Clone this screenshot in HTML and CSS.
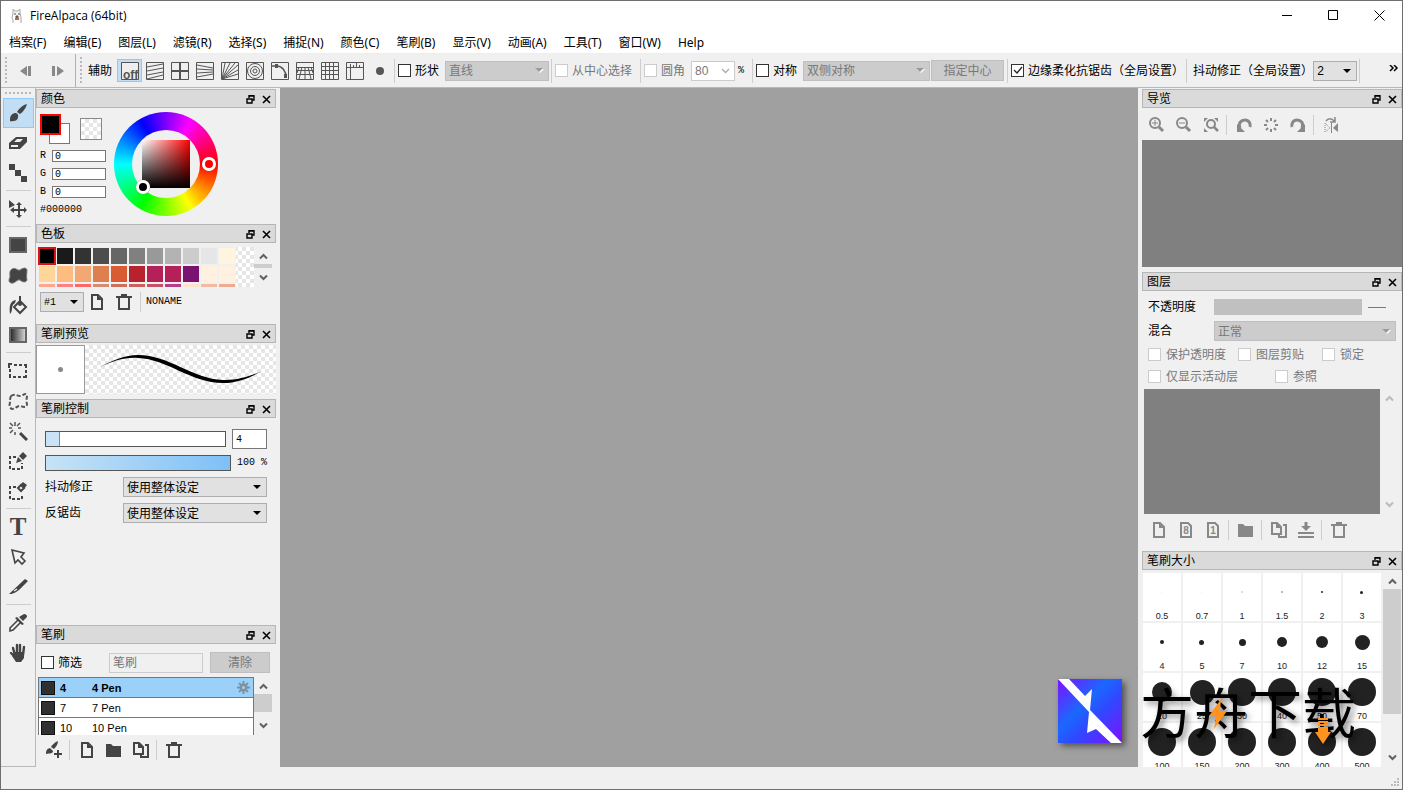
FILE: index.html
```
<!DOCTYPE html>
<html lang="zh-CN">
<head>
    <meta charset="UTF-8">
    <meta name="viewport" content="width=device-width, initial-scale=1.0">
    <title>FireAlpaca (64bit)</title>
    <link rel="stylesheet" href="styles.css">
</head>
<body>
    <!-- shared icons -->
    <svg class="defs" width="0" height="0" aria-hidden="true">
        <symbol id="float" viewBox="0 0 9 9"><path d="M3 1h5v4h-2M3 .5h5.5M1 4h5v4h-5zM.5 4h6M3 0v3" fill="none" stroke="currentColor" stroke-width="1.4"/></symbol>
        <symbol id="close" viewBox="0 0 9 9"><path d="M1 1l7 7M8 1l-7 7" stroke="currentColor" stroke-width="1.6"/></symbol>
        <symbol id="up" viewBox="0 0 9 7"><path d="M1 5.5l3.5-3.5l3.5 3.5" fill="none" stroke="currentColor" stroke-width="2"/></symbol>
        <symbol id="down" viewBox="0 0 9 7"><path d="M1 1.5l3.5 3.5l3.5-3.5" fill="none" stroke="currentColor" stroke-width="2"/></symbol>
        <symbol id="page" viewBox="0 0 18 18"><path d="M4 2h6l4 4v10h-10z" fill="none" stroke="currentColor" stroke-width="2"/><path d="M9 2l5 5h-5z" fill="currentColor"/></symbol>
        <symbol id="pages" viewBox="0 0 18 18"><path d="M2 2h5l4 4v7h-9z" fill="none" stroke="currentColor" stroke-width="2"/><path d="M6 1l5 6h-5z" fill="currentColor"/><path d="M13 4h3v12h-7v-2" fill="none" stroke="currentColor" stroke-width="2"/></symbol>
        <symbol id="folder" viewBox="0 0 18 18"><path d="M1 3h5l2 2h8v11h-15z" fill="currentColor"/></symbol>
        <symbol id="trash" viewBox="0 0 18 18"><path d="M1 4h16M6 2h6M4 4v12h10v-12" fill="none" stroke="currentColor" stroke-width="2"/></symbol>
        <symbol id="loupe" viewBox="0 0 18 18"><circle cx="7" cy="7" r="5" fill="none" stroke="currentColor" stroke-width="2"/><path d="M11 11l4 4" stroke="currentColor" stroke-width="3"/></symbol>
        <symbol id="rotate" viewBox="0 0 18 18"><path d="M5 12c-2-5 1-8 5-8c4 0 6 4 5 7" fill="none" stroke="currentColor" stroke-width="3"/><path d="M2 16v-8l8 8z" fill="currentColor"/></symbol>
    </svg>

    <div class="window">
        <header class="titlebar">
            <svg class="logo" width="14" height="16" viewBox="0 0 14 16"><path d="M3 5v-4l2 2h3l2-2v4l1 4v6M3 5l-1 5l1 2v3" fill="#f4f4f4" stroke="#aaa"/><path d="M4 6h2M8 6h2M6 8h2v2h-2z" stroke="#555" fill="#777"/><path d="M5 10h4v2h-4z" fill="#b66a50"/></svg>
            <h1>FireAlpaca (64bit)</h1>
            <div class="window-buttons">
                <button aria-label="Minimize"><svg width="11" height="11" viewBox="0 0 11 11"><path d="M0 5.500h10" stroke="#000"/></svg></button>
                <button aria-label="Maximize"><svg width="11" height="11" viewBox="0 0 11 11"><path d="M.5.5h9v9h-9z" fill="none" stroke="#000"/></svg></button>
                <button aria-label="Close"><svg width="11" height="11" viewBox="0 0 11 11"><path d="M.5.5l10 10M10.500.5l-10 10" stroke="#000"/></svg></button>
            </div>
        </header>

        <nav class="menubar">
            <a href="#">档案(F)</a>
            <a href="#">编辑(E)</a>
            <a href="#">图层(L)</a>
            <a href="#">滤镜(R)</a>
            <a href="#">选择(S)</a>
            <a href="#">捕捉(N)</a>
            <a href="#">颜色(C)</a>
            <a href="#">笔刷(B)</a>
            <a href="#">显示(V)</a>
            <a href="#">动画(A)</a>
            <a href="#">工具(T)</a>
            <a href="#">窗口(W)</a>
            <a href="#">Help</a>
        </nav>

        <div class="toolbar">
            <div class="history">
                <span class="grip"></span>
                <button aria-label="Undo" disabled><svg width="14" height="12" viewBox="0 0 14 12"><path d="M8 1v10l-7-5z" fill="#888"/><path d="M10.500 1v10" stroke="#888" stroke-width="3"/></svg></button>
                <button aria-label="Redo" disabled><svg width="14" height="12" viewBox="0 0 14 12"><path d="M6 1v10l7-5z" fill="#888"/><path d="M2.500 1v10" stroke="#888" stroke-width="3"/></svg></button>
            </div>
            <span class="grip"></span>
            <span class="assist-label">辅助</span>
            <div class="assist">
                <button class="active" aria-label="off"><svg width="18" height="18" viewBox="0 0 18 18"><path d="M.5.5h17v17h-17z" fill="#eee" stroke="#555"/><text x="2" y="17" class="off-text">off</text></svg></button>
                <button aria-label="Parallel"><svg width="18" height="18" viewBox="0 0 18 18"><path d="M.5.5h17v17h-17zM1 5l16-3M1 9l16-3M1 13l16-3M1 17l16-4" fill="none" stroke="#555"/></svg></button>
                <button aria-label="Cross"><svg width="18" height="18" viewBox="0 0 18 18"><path d="M.5.5h17v17h-17z" fill="none" stroke="#555"/><path d="M1 9h16M9 1v16" stroke="#555" stroke-width="2"/></svg></button>
                <button aria-label="Vanishing point"><svg width="18" height="18" viewBox="0 0 18 18"><path d="M.5.5h17v17h-17zM1 3l16 3M1 7l16 1M1 11l16-1M1 15l16-3" fill="none" stroke="#555"/></svg></button>
                <button aria-label="Radial"><svg width="18" height="18" viewBox="0 0 18 18"><path d="M.5.5h17v17h-17zM1 17l3-16M1 17l8-16M1 17l13-16M1 17l16-14M1 17l16-9M1 17l16-5" fill="none" stroke="#555"/></svg></button>
                <button aria-label="Concentric"><svg width="18" height="18" viewBox="0 0 18 18"><g fill="none" stroke="#555"><path d="M.5.5h17v17h-17z"/><circle cx="9" cy="9" r="7.500"/><circle cx="9" cy="9" r="4.500"/><circle cx="9" cy="9" r="2"/></g></svg></button>
                <button aria-label="Curve"><svg width="18" height="18" viewBox="0 0 18 18"><path d="M.5.5h17v17h-17z" fill="none" stroke="#555"/><path d="M1 4h5c5 0 9 5 9 11" fill="none" stroke="#555" stroke-width="1.500"/><path d="M4 2h3v4h-3zM13 12h3v4h-3z" fill="#555"/></svg></button>
                <button aria-label="Perspective"><svg width="18" height="18" viewBox="0 0 18 18"><path d="M.5.5h17v17h-17zM0 5.500h17M0 8.500h17M0 12.500h17M6 5l-3 12M9 5v12M12 5l3 12M3 5l-2 6M15 5l2 6" fill="none" stroke="#555"/></svg></button>
                <button aria-label="Grid"><svg width="18" height="18" viewBox="0 0 18 18"><path d="M.5.5h17v17h-17zM0 4.500h18M0 8.500h18M0 12.500h18M4.500 0v18M8.500 0v18M12.500 0v18" fill="none" stroke="#555"/></svg></button>
                <button aria-label="Ruler"><svg width="18" height="18" viewBox="0 0 18 18"><path d="M.5.5h17v17h-17zM0 5.500h18M4.500 2v16M7.500 3v2M10.500 1v4M13.500 3v2" fill="none" stroke="#555"/></svg></button>
                <button aria-label="Dot"><svg width="18" height="18" viewBox="0 0 18 18"><circle cx="9" cy="9" r="4" fill="#555"/></svg></button>
            </div>
            <div class="group">
                <label><input type="checkbox">形状</label>
                <select class="shape-kind" aria-label="形状" disabled><option>直线</option></select>
            </div>
            <div class="group wide">
                <label><input type="checkbox" disabled>从中心选择</label>
            </div>
            <div class="group">
                <label><input type="checkbox" disabled>圆角</label>
                <select class="round" aria-label="圆角" disabled><option>80</option></select>
                <span class="mono">%</span>
            </div>
            <div class="group">
                <label><input type="checkbox">对称</label>
                <select class="symmetry" aria-label="对称" disabled><option>双侧对称</option></select>
                <button class="push" disabled>指定中心</button>
            </div>
            <div class="group">
                <label><input type="checkbox" checked>边缘柔化抗锯齿（全局设置）</label>
            </div>
            <div class="group stabilizer">
                <label for="stab">抖动修正（全局设置）</label>
                <select id="stab"><option>2</option></select>
            </div>
            <button class="more" aria-label="More"><svg width="10" height="7" viewBox="0 0 10 7"><path d="M1 0l3 3l-3 3M5 0l3 3l-3 3" fill="none" stroke="#000" stroke-width="1.500"/></svg></button>
        </div>

        <main class="workspace">
            <aside class="tools">
                <span class="grip-h"></span>
                <button class="active" aria-label="Brush"><svg width="20" height="20" viewBox="0 0 20 20"><path d="M19 1c-4 1-8 4-10 8l3 2c3-2 6-6 7-10z"/><path d="M7 10c2 0 4 2 3 4c0 3-3 4-4 4c-2 0-3 1-4 0c0-3 0-7 5-8"/></svg></button>
                <button aria-label="Eraser"><svg width="20" height="20" viewBox="0 0 20 20"><path d="M1 10l7-6h11v5l-7 7h-11z"/><path d="M3 12h7v2h-7zM6 9l3-3h6l-3 3z" fill="#f0f0f0"/></svg></button>
                <button aria-label="Dot tool"><svg width="20" height="20" viewBox="0 0 20 20"><path d="M1 1h6v6h-6zM7 7h6v6h-6zM13 13h6v6h-6z"/></svg></button>
                <hr>
                <button aria-label="Move"><svg width="20" height="20" viewBox="0 0 20 20"><path d="M1 1l6 5l-6 3zM11 3l-3 3h2v4h-4v-2l-4 3l4 3v-2h4v4h-2l3 3l3-3h-2v-4h4v2l3-3l-3-3v2h-4v-4h2z"/></svg></button>
                <hr>
                <button aria-label="Fill shape"><svg width="20" height="20" viewBox="0 0 20 20"><path d="M2 3h16v14h-16z" stroke="#666" stroke-width="2"/></svg></button>
                <button aria-label="Fill polygon"><svg width="20" height="20" viewBox="0 0 20 20"><path d="M4 4c4-2 5 2 8 1c3-2 6-3 7 0c0 4-1 6 0 10c-1 3-5 2-7 0c-3-1-5 4-9 3c-3-1-2-4-1-6c0-3-1-6 2-8z" stroke="#777"/></svg></button>
                <button aria-label="Bucket"><svg width="20" height="20" viewBox="0 0 20 20"><path d="M12 6l6 6l-6 6l-6-6zM12 1v8" fill="none" stroke="#444" stroke-width="2"/><path d="M8 5c-6 1-7 6-6 14c4-4 0-8 5-11z"/><circle cx="12" cy="9" r="2"/></svg></button>
                <button aria-label="Gradient"><svg width="20" height="20" viewBox="0 0 20 20"><defs><linearGradient id="grey"><stop offset="0" stop-color="#222"/><stop offset="1" stop-color="#ddd"/></linearGradient></defs><path d="M2 3h16v14h-16z" fill="url(#grey)" stroke="#666" stroke-width="2"/></svg></button>
                <hr>
                <button aria-label="Select"><svg width="20" height="20" viewBox="0 0 20 20"><path d="M1 7v-4h3M6 4h3M11 4h3M16 4h2v3M18 9v3M18 14v2h-3M13 16h-3M8 16h-3M3 16h-1v-3M2 11v-3" fill="none" stroke="#444" stroke-width="2"/></svg></button>
                <button aria-label="Lasso"><svg width="20" height="20" viewBox="0 0 20 20"><path d="M3 5c4-3 6 0 9 0s5-4 7-1c0 3-1 6 0 9c0 4-4 3-6 2c-4-1-5 3-9 3c-4-2-2-5-2-7c0-2 0-4 1-6" fill="none" stroke="#555" stroke-width="2" stroke-dasharray="4 2"/></svg></button>
                <button aria-label="Magic wand"><svg width="20" height="20" viewBox="0 0 20 20"><path d="M12 12l7 7" fill="none" stroke="#444" stroke-width="3"/><path d="M7 1v4M7 11v3M1 7h3M10 7h3M2 2l3 3M12 2l-3 3M2 12l3-3" stroke="#555" stroke-width="1.500"/></svg></button>
                <button aria-label="Select pen"><svg width="20" height="20" viewBox="0 0 20 20"><path d="M8 6h-6v12h12v-6" fill="none" stroke="#444" stroke-width="2" stroke-dasharray="3 2"/><path d="M15 1l4 4l-4 4l-4-4zM10 6l4 4l-6 2z"/></svg></button>
                <button aria-label="Select eraser"><svg width="20" height="20" viewBox="0 0 20 20"><path d="M8 6h-6v12h12v-5" fill="none" stroke="#444" stroke-width="2" stroke-dasharray="3 2"/><path d="M15 1l4 3l-3 4l-4-4z"/><path d="M13 4l3 3l-3 3l-3-3z" fill="none" stroke="#444" stroke-width="2"/></svg></button>
                <hr>
                <button aria-label="Text"><svg width="20" height="20" viewBox="0 0 20 20"><text x="10" y="18" class="tool-t">T</text></svg></button>
                <button aria-label="Operation"><svg width="20" height="20" viewBox="0 0 20 20"><path d="M4 3l12 3l-3 4l4 4l-3 3l-4-4l-3 3z" fill="none" stroke="#444" stroke-width="1.600"/></svg></button>
                <button aria-label="Divide"><svg width="20" height="20" viewBox="0 0 20 20"><path d="M17 2l3 2l-9 9c-3 2-5 4-10 4z"/><path d="M6 14l3-2" stroke="#eee" stroke-width="1.500"/></svg></button>
                <hr>
                <button aria-label="Eyedropper"><svg width="20" height="20" viewBox="0 0 20 20"><path d="M16 1c3 0 4 3 2 4l-3 3l-4-4zM9 4l7 7l-2 1l-7-7z"/><path d="M10 7l-8 8v3l3-1l8-8" fill="none" stroke="#444" stroke-width="1.600"/></svg></button>
                <button aria-label="Hand"><svg width="20" height="20" viewBox="0 0 20 20"><path d="M5 5l2 7M9 2v9M12 2v9M16 4l-1 8M3 10l5 5" fill="none" stroke="#444" stroke-width="2.400" stroke-linecap="round"/><path d="M6 9h10v6l-3 4h-5l-4-6z"/></svg></button>
            </aside>

            <aside class="dock dock-left">
                <section class="panel">
                    <h2>颜色 <span class="panel-buttons"><button aria-label="Float"><svg width="9" height="9"><use href="#float"/></svg></button><button aria-label="Close"><svg width="9" height="9"><use href="#close"/></svg></button></span></h2>
                    <div class="color-body">
                        <div class="color-fields">
                            <div class="swatches">
                                <span class="pair"><i class="back"></i><i class="front"></i></span>
                                <i class="none checker"></i>
                            </div>
                            <label>R <input type="text" value="0"></label>
                            <label>G <input type="text" value="0"></label>
                            <label>B <input type="text" value="0"></label>
                            <span>#000000</span>
                        </div>
                        <div class="wheel">
                            <div class="wheel-hole"><div class="shade"></div></div>
                            <i class="knob hue-knob"></i>
                            <i class="knob shade-knob"></i>
                        </div>
                    </div>
                </section>

                <section class="panel">
                    <h2>色板 <span class="panel-buttons"><button aria-label="Float"><svg width="9" height="9"><use href="#float"/></svg></button><button aria-label="Close"><svg width="9" height="9"><use href="#close"/></svg></button></span></h2>
                    <div class="palette">
                        <div class="palette-grid checker">
                            <i class="picked" style="background:#000"></i><i style="background:#1a1a1a"></i><i style="background:#333"></i><i style="background:#4d4d4d"></i><i style="background:#666"></i><i style="background:#808080"></i><i style="background:#999"></i><i style="background:#b3b3b3"></i><i style="background:#ccc"></i><i style="background:#e6e6e6"></i><i style="background:#fff4de"></i>
                            <i style="background:#ffd699"></i><i style="background:#ffbc80"></i><i style="background:#f2a873"></i><i style="background:#df7f50"></i><i style="background:#d95b34"></i><i style="background:#b8222c"></i><i style="background:#b62059"></i><i style="background:#b62059"></i><i style="background:#7a126f"></i><i style="background:#fff0e0"></i><i style="background:#fff0e0"></i>
                            <i style="background:#ffa68c"></i><i style="background:#ff8080"></i><i style="background:#ff6666"></i><i style="background:#d68c73"></i><i style="background:#cc7059"></i><i style="background:#cc6060"></i><i style="background:#c75068"></i><i style="background:#b53d8b"></i><i style="background:#ffe3cf"></i><i style="background:#f4b99e"></i><i style="background:#f0aa8c"></i>
                        </div>
                        <div class="scroll"><svg width="9" height="7"><use href="#up"/></svg><b class="thumb-6"></b><svg width="9" height="7"><use href="#down"/></svg></div>
                    </div>
                    <div class="palette-bar">
                        <select class="mono" aria-label="色板"><option>#1</option></select>
                        <button aria-label="New"><svg width="18" height="18"><use href="#page"/></svg></button>
                        <button aria-label="Delete"><svg width="18" height="18"><use href="#trash"/></svg></button>
                        <span class="mono palette-name">NONAME</span>
                    </div>
                </section>

                <section class="panel">
                    <h2>笔刷预览 <span class="panel-buttons"><button aria-label="Float"><svg width="9" height="9"><use href="#float"/></svg></button><button aria-label="Close"><svg width="9" height="9"><use href="#close"/></svg></button></span></h2>
                    <div class="preview">
                        <div class="tip"><i></i></div>
                        <svg class="checker" width="191" height="49" viewBox="0 0 191 49"><path d="M15 22C28 15 40 10 53 10C84 10 108 34 138 35C152 35.500 166 31 177 26C166 32 153 38 138 38C106 38 82 14 53 13C40 12 28 16 15 22z" fill="#000"/></svg>
                    </div>
                </section>

                <section class="panel grow">
                    <h2>笔刷控制 <span class="panel-buttons"><button aria-label="Float"><svg width="9" height="9"><use href="#float"/></svg></button><button aria-label="Close"><svg width="9" height="9"><use href="#close"/></svg></button></span></h2>
                    <div class="control">
                        <div class="control-row"><input class="size-range" type="range" min="0" max="50" value="4" aria-label="笔刷大小"><input class="size-value" type="text" value="4" aria-label="笔刷大小"></div>
                        <div class="control-row"><input class="alpha-range" type="range" value="100" aria-label="不透明度"><span class="mono">100 %</span></div>
                        <div class="control-row pick"><label for="fix">抖动修正</label><select id="fix"><option>使用整体设定</option></select></div>
                        <div class="control-row pick"><label for="aa">反锯齿</label><select id="aa"><option>使用整体设定</option></select></div>
                    </div>
                </section>

                <section class="panel">
                    <h2>笔刷 <span class="panel-buttons"><button aria-label="Float"><svg width="9" height="9"><use href="#float"/></svg></button><button aria-label="Close"><svg width="9" height="9"><use href="#close"/></svg></button></span></h2>
                    <div class="filter">
                        <label><input type="checkbox">筛选</label>
                        <input type="text" placeholder="笔刷" aria-label="笔刷" disabled>
                        <button class="push" disabled>清除</button>
                    </div>
                    <div class="brushes">
                        <ul>
                            <li class="selected"><i></i><span>4</span><span>4 Pen</span><svg width="13" height="13" viewBox="0 0 13 13"><g stroke="#8092a0" stroke-width="2"><path d="M6.500 0v13M0 6.500h13M2 2l9 9M11 2l-9 9"/></g><circle cx="6.500" cy="6.500" r="4" fill="#8092a0"/><circle cx="6.500" cy="6.500" r="1.500" fill="#9bd0f8"/></svg></li>
                            <li><i></i><span>7</span><span>7 Pen</span></li>
                            <li><i></i><span>10</span><span>10 Pen</span></li>
                        </ul>
                        <div class="scroll"><svg width="9" height="7"><use href="#up"/></svg><b class="thumb-18"></b><svg class="last" width="9" height="7"><use href="#down"/></svg></div>
                    </div>
                    <div class="icon-bar brush-bar">
                        <button aria-label="Add brush"><svg width="18" height="18" viewBox="0 0 18 18"><path d="M13 0c-3 1-6 4-7 6l3 2c2-2 4-5 4-8zM5 7l3 3c0 3-3 2-7 3c0-2 0-5 4-6" fill="currentColor"/><path d="M13 9v8M9 13h8" stroke="currentColor" stroke-width="2"/></svg></button>
                        <hr>
                        <button aria-label="New"><svg width="18" height="18"><use href="#page"/></svg></button>
                        <button aria-label="Folder"><svg width="18" height="18"><use href="#folder"/></svg></button>
                        <button aria-label="Duplicate"><svg width="18" height="18"><use href="#pages"/></svg></button>
                        <hr>
                        <button aria-label="Delete"><svg width="18" height="18"><use href="#trash"/></svg></button>
                    </div>
                </section>
            </aside>

            <div class="canvas"></div>

            <aside class="dock dock-right">
                <section class="panel">
                    <h2>导览 <span class="panel-buttons"><button aria-label="Float"><svg width="9" height="9"><use href="#float"/></svg></button><button aria-label="Close"><svg width="9" height="9"><use href="#close"/></svg></button></span></h2>
                    <div class="icon-bar muted nav-bar">
                        <button aria-label="Zoom in"><svg width="18" height="18" viewBox="0 0 18 18"><use href="#loupe"/><path d="M4 7h6M7 4v6" stroke="currentColor"/></svg></button>
                        <button aria-label="Zoom out"><svg width="18" height="18" viewBox="0 0 18 18"><use href="#loupe"/><path d="M4 7h6" stroke="currentColor"/></svg></button>
                        <button aria-label="Fit"><svg width="18" height="18" viewBox="0 0 18 18"><circle cx="9" cy="8" r="4" fill="none" stroke="currentColor" stroke-width="2"/><path d="M12 11l4 4" stroke="currentColor" stroke-width="2.500"/><path d="M2 6v-4h4zM16 6v-4h-4zM2 12v4h4z" fill="currentColor"/></svg></button>
                        <hr>
                        <button aria-label="Rotate left"><svg width="18" height="18"><use href="#rotate"/></svg></button>
                        <button aria-label="Reset"><svg width="18" height="18" viewBox="0 0 18 18"><path d="M9 2v3M9 13v3M2 9h3M13 9h3M4 4l2 2M12 12l2 2M14 4l-2 2M6 12l-2 2" stroke="currentColor" stroke-width="2"/></svg></button>
                        <button aria-label="Rotate right"><svg width="18" height="18" viewBox="0 0 18 18"><g transform="matrix(-1 0 0 1 18 0)"><use href="#rotate"/></g></svg></button>
                        <hr>
                        <button aria-label="Flip"><svg width="18" height="18" viewBox="0 0 18 18"><path d="M16 7v9l-5-4z" fill="currentColor"/><path d="M9.500 7v10" stroke="currentColor"/><path d="M3 7v9l5-4z" fill="none" stroke="currentColor" stroke-dasharray="1 1"/><path d="M4 5c2-3 6-3 8 0M13 1v5h-5" fill="none" stroke="currentColor" stroke-width="1.500"/></svg></button>
                    </div>
                    <div class="navigator"></div>
                </section>

                <section class="panel">
                    <h2>图层 <span class="panel-buttons"><button aria-label="Float"><svg width="9" height="9"><use href="#float"/></svg></button><button aria-label="Close"><svg width="9" height="9"><use href="#close"/></svg></button></span></h2>
                    <div class="layer-form">
                        <div class="layer-row"><label for="opacity">不透明度</label><input id="opacity" type="range" disabled><span class="dash"></span></div>
                        <div class="layer-row"><label for="blend">混合</label><select id="blend" disabled><option>正常</option></select></div>
                        <div class="layer-checks">
                            <label><input type="checkbox" disabled>保护透明度</label>
                            <label><input type="checkbox" disabled>图层剪贴</label>
                            <label><input type="checkbox" disabled>锁定</label>
                        </div>
                        <div class="layer-checks second">
                            <label><input type="checkbox" disabled>仅显示活动层</label>
                            <label><input type="checkbox" disabled>参照</label>
                        </div>
                    </div>
                    <div class="layer-list">
                        <div class="layer-area"></div>
                        <div class="scroll faded"><svg width="9" height="7"><use href="#up"/></svg><svg class="last" width="9" height="7"><use href="#down"/></svg></div>
                    </div>
                    <div class="icon-bar muted layer-bar">
                        <button aria-label="New layer"><svg width="18" height="18"><use href="#page"/></svg></button>
                        <button aria-label="New 8bit layer"><svg width="18" height="18" viewBox="0 0 18 18"><path d="M4 2h7l3 3v11h-10z" fill="none" stroke="currentColor" stroke-width="2"/><text x="9" y="13" class="bit">8</text></svg></button>
                        <button aria-label="New 1bit layer"><svg width="18" height="18" viewBox="0 0 18 18"><path d="M4 2h7l3 3v11h-10z" fill="none" stroke="currentColor" stroke-width="2"/><text x="9" y="13" class="bit">1</text></svg></button>
                        <hr>
                        <button aria-label="Folder"><svg width="18" height="18"><use href="#folder"/></svg></button>
                        <hr>
                        <button aria-label="Duplicate"><svg width="18" height="18"><use href="#pages"/></svg></button>
                        <button aria-label="Merge"><svg width="18" height="18" viewBox="0 0 18 18"><path d="M9 1v5" stroke="currentColor" stroke-width="3"/><path d="M4 5h10l-5 5z" fill="currentColor"/><path d="M1 12h16M1 16h16" stroke="currentColor" stroke-width="2"/></svg></button>
                        <hr>
                        <button aria-label="Delete"><svg width="18" height="18"><use href="#trash"/></svg></button>
                    </div>
                </section>

                <section class="panel grow">
                    <h2>笔刷大小 <span class="panel-buttons"><button aria-label="Float"><svg width="9" height="9"><use href="#float"/></svg></button><button aria-label="Close"><svg width="9" height="9"><use href="#close"/></svg></button></span></h2>
                    <div class="sizes">
                        <div class="size-grid">
                            <button><i class="d1 faint-1"></i>0.5</button><button><i class="d1 faint-1"></i>0.7</button><button><i class="d2 faint-2"></i>1</button><button><i class="d2 faint-3"></i>1.5</button><button><i class="d2"></i>2</button><button><i class="d3"></i>3</button>
                            <button><i class="d4"></i>4</button><button><i class="d5"></i>5</button><button><i class="d7"></i>7</button><button><i class="d10"></i>10</button><button><i class="d12"></i>12</button><button><i class="d15"></i>15</button>
                            <button><i class="d20"></i>20</button><button><i class="d25"></i>25</button><button><i class="d28"></i>30</button><button><i class="d28"></i>40</button><button><i class="d28"></i>50</button><button><i class="d28"></i>70</button>
                            <button><i class="d28"></i>100</button><button><i class="d28"></i>150</button><button><i class="d28"></i>200</button><button><i class="d28"></i>300</button><button><i class="d28"></i>400</button><button><i class="d28"></i>500</button>
                        </div>
                        <div class="scroll"><svg width="9" height="7"><use href="#up"/></svg><b class="thumb-125"></b><svg class="last" width="9" height="7"><use href="#down"/></svg></div>
                    </div>
                </section>
            </aside>
        </main>

        <footer class="statusbar">
            <svg width="9" height="9" viewBox="0 0 9 9"><path d="M6 0h2v2h-2zM3 3h2v2h-2zM6 3h2v2h-2zM0 6h2v2h-2zM3 6h2v2h-2zM6 6h2v2h-2z" fill="#bbb"/></svg>
        </footer>
    </div>

    <div class="brand">
        <svg class="brand-logo" width="64" height="64" viewBox="0 0 64 64">
            <defs><linearGradient id="brand" x1="0" y1="0" x2="1" y2="1"><stop offset="0" stop-color="#8010ff"/><stop offset=".4" stop-color="#1a68ff"/><stop offset=".6" stop-color="#3048ff"/><stop offset="1" stop-color="#8010ff"/></linearGradient></defs>
            <path d="M0 0h64v64h-64z" fill="url(#brand)"/>
            <path d="M0 0h11l16 17l7-7l-2 21l32 33h-11l-15-14l-9 4l2-21z" fill="#fff"/>
        </svg>
        <span>方舟下载</span>
        <svg class="bolt" width="18" height="30" viewBox="0 0 18 30"><path d="M12 0l-12 17h7l-2 13l13-18h-7z" fill="#ff931e"/></svg>
        <svg class="arrow" width="16" height="26" viewBox="0 0 16 26"><path d="M3 0h10v2h-10zM3 3h10v2h-10zM3 6h10v2h-10zM3 9h10v5h3l-8 12l-8-12h3z" fill="#ff931e"/></svg>
    </div>
</body>
</html>
```
FILE: styles.css
```
* {
    box-sizing: border-box;
}

body {
    margin: 0;
    font: 12px/16px "Liberation Sans", "Noto Sans CJK SC", sans-serif;
    color: #000;
    background: #f0f0f0;
}

button, input, select {
    margin: 0;
    font: inherit;
    color: inherit;
}

button {
    display: flex;
    align-items: center;
    justify-content: center;
    padding: 0;
    border: 0;
    background: none;
}

svg {
    display: block;
    flex: none;
}

.defs {
    position: absolute;
}

.mono {
    font-family: "Liberation Mono", monospace;
    font-size: 10px;
}

.window {
    display: flex;
    flex-direction: column;
    height: 100vh;
    border: 1px solid #6e6e6e;
}

/* title and menu */
.titlebar {
    display: flex;
    align-items: center;
    height: 29px;
    padding-left: 9px;
    background: #fff;
}

.titlebar h1 {
    margin: 0 auto 0 6px;
    font: 12px/16px "Open Sans", sans-serif;
}

.window-buttons {
    display: flex;
}

.window-buttons button {
    width: 46px;
    height: 29px;
}

.menubar {
    display: flex;
    gap: 17px;
    height: 24px;
    padding: 5px 8px 0;
    background: #fff;
    border-bottom: 1px solid #eee;
    font-family: "Noto Sans", "Noto Sans CJK SC", sans-serif;
}

.menubar a {
    color: #000;
    text-decoration: none;
    white-space: nowrap;
}

/* toolbar */
.toolbar {
    display: flex;
    align-items: center;
    height: 34px;
    padding-left: 4px;
    border-bottom: 1px solid #b8b8b8;
    white-space: nowrap;
}

.grip {
    flex: none;
    width: 2px;
    height: 27px;
    background: repeating-linear-gradient(#b8b8b8 0 2px, transparent 2px 4px);
}

.history {
    display: flex;
    align-items: center;
    width: 71px;
    height: 33px;
    margin-right: 4px;
    border-right: 1px solid #b0b0b0;
}

.history button {
    width: 32px;
    height: 26px;
}

.history .grip + button {
    margin-left: 3px;
}

.assist-label {
    margin: 0 5px 0 6px;
}

.assist {
    display: flex;
    margin-right: 2px;
}

.assist button {
    width: 25px;
    height: 23px;
}

.assist .active, .tools .active {
    background: #c2def5;
    border: 1px solid #90c8f6;
}

.off-text {
    font: bold 13px "Liberation Sans", sans-serif;
    font-size: 12px;
    fill: #555;
}

.group {
    display: flex;
    align-items: center;
    gap: 6px;
    height: 24px;
    margin-right: 2px;
    padding-left: 3px;
    border-left: 1px solid #cdcdcd;
}

.group.wide {
    padding-right: 6px;
}

.group .push {
    width: 73px;
    margin: 0 1px 0 -5px;
}

.group .mono {
    margin: 0 6px 0 -3px;
}

.stabilizer {
    gap: 0;
    padding: 0 2px 0 6px;
    border-right: 1px solid #cdcdcd;
}

.more {
    margin: -4px 3px 0 auto;
}

label {
    display: flex;
    align-items: center;
    gap: 4px;
    white-space: nowrap;
}

label:has(:disabled) {
    color: #787878;
}

input[type="checkbox"] {
    appearance: none;
    flex: none;
    width: 13px;
    height: 13px;
    border: 1px solid #333;
    background: #fff;
}

input[type="checkbox"]:disabled {
    border-color: #ccc;
}

input[type="checkbox"]:checked {
    background: #fff url("data:image/svg+xml,%3Csvg xmlns='http://www.w3.org/2000/svg' width='11' height='11'%3E%3Cpath d='M2 5l3 3l5-6' fill='none' stroke='%23222' stroke-width='1.3'/%3E%3C/svg%3E");
}

select {
    appearance: none;
    height: 20px;
    padding: 1px 3px 0;
    border: 1px solid #adadad;
    border-radius: 0;
    background: #e1e1e1 url("data:image/svg+xml,%3Csvg xmlns='http://www.w3.org/2000/svg' width='8' height='4'%3E%3Cpath d='M0 0h8l-4 4z'/%3E%3C/svg%3E") no-repeat right 5px center;
}

select:disabled {
    color: #787878;
    opacity: 1;
    border-color: #bfbfbf;
    background: #ccc url("data:image/svg+xml,%3Csvg xmlns='http://www.w3.org/2000/svg' width='9' height='5'%3E%3Cpath d='M1 1h8l-4 4z' fill='%23fff'/%3E%3Cpath d='M0 0h8l-4 4z' fill='%23999'/%3E%3C/svg%3E") no-repeat right 4px center;
}

.push {
    height: 21px;
    border: 1px solid #bfbfbf;
    background: #ccc;
}

.push:disabled {
    color: #787878;
}

.shape-kind {
    width: 104px;
}

.symmetry {
    width: 127px;
}

#stab {
    width: 44px;
}

select.round:disabled {
    width: 44px;
    background: #fff url("data:image/svg+xml,%3Csvg xmlns='http://www.w3.org/2000/svg' width='9' height='6'%3E%3Cpath d='M1 1l3.500 3.500l3.500-3.500' fill='none' stroke='%23aaa' stroke-width='1.3'/%3E%3C/svg%3E") no-repeat right 4px center;
    border-color: #ccc;
}

/* workspace */
.workspace {
    display: flex;
    flex: 1;
    min-height: 0;
}

.tools {
    flex: none;
    width: 35px;
    padding: 4px 1px 0 2px;
    border-right: 1px solid #b8b8b8;
    border-bottom: 1px solid #b8b8b8;
    overflow: hidden;
}

.grip-h {
    display: block;
    width: 27px;
    height: 2px;
    margin: 0 0 4px 2px;
    background: repeating-linear-gradient(90deg, #b8b8b8 0 2px, transparent 2px 4px);
}

.tools button {
    width: 31px;
    height: 30px;
    padding-right: 1px;
}

.tools svg {
    fill: #444;
}

.tools hr {
    height: 1px;
    margin: 2px 3px 3px;
    border: 0;
    background: #cdcdcd;
}

.tool-t {
    font: bold 25px "Liberation Serif", serif;
    text-anchor: middle;
}

.dock {
    display: flex;
    flex-direction: column;
    flex: none;
    gap: 5px;
    padding-top: 1px;
    overflow: hidden;
}

.dock-left {
    width: 240px;
}

.dock-right {
    width: 260px;
}

.canvas {
    flex: 1;
    margin: 0 4px;
    background: #a0a0a0;
}

.panel {
    display: flex;
    flex-direction: column;
    flex: none;
}

.panel.grow {
    flex: 1;
    min-height: 0;
}

.panel h2 {
    display: flex;
    justify-content: space-between;
    align-items: center;
    height: 19px;
    margin: 0;
    padding: 1px 4px 0;
    border: 1px solid #b6b6b6;
    background: #dadada;
    font-size: 12px;
    font-weight: normal;
}

.panel-buttons {
    display: flex;
    gap: 7px;
}

.checker {
    background: repeating-conic-gradient(#e6e6e6 0 25%, #fff 0 50%) 0 0 / 8px 8px;
}

.scroll {
    display: flex;
    flex-direction: column;
    align-items: center;
    width: 18px;
    padding: 6px 0;
    color: #606060;
}

.scroll b {
    width: 18px;
    background: #cdcdcd;
}

.scroll .last {
    margin-top: auto;
}

.faded {
    color: #bbb;
}

.thumb-6 {
    height: 6px;
    margin: 4px 0 6px;
}

.thumb-18 {
    height: 18px;
    margin-top: 4px;
}

.thumb-125 {
    height: 125px;
    margin-top: 4px;
}

/* colour panel */
.color-body {
    display: flex;
    gap: 8px;
    height: 111px;
    padding: 4px;
}

.color-fields {
    width: 66px;
    font: 10px/12px "Liberation Mono", monospace;
}

.color-fields label {
    justify-content: space-between;
    height: 12px;
    margin-bottom: 6px;
}

.color-fields input {
    width: 54px;
    height: 12px;
    padding: 1px 2px 0;
    border: 1px solid #777;
    background: #fff;
}

.swatches {
    display: flex;
    justify-content: space-between;
    height: 38px;
    padding-top: 2px;
}

.pair {
    position: relative;
    width: 30px;
    height: 30px;
}

.pair i {
    position: absolute;
    width: 21px;
    height: 21px;
}

.front {
    top: 0;
    left: 0;
    border: 2px solid #f00;
    background: #000;
}

.back {
    right: 0;
    bottom: 0;
    border: 1px solid #777;
    background: #fff;
}

.none {
    width: 22px;
    height: 22px;
    margin: 4px 4px 0 0;
    border: 1px solid #888;
}

.wheel {
    position: relative;
    display: flex;
    align-items: center;
    justify-content: center;
    width: 104px;
    height: 104px;
    border-radius: 50%;
    background: conic-gradient(from 90deg, #f00, #ff0, #0f0, #0ff, #00f, #f0f, #f00);
}

.wheel-hole {
    display: flex;
    align-items: center;
    justify-content: center;
    width: 68px;
    height: 68px;
    border-radius: 50%;
    background: #f0f0f0;
}

.shade {
    width: 48px;
    height: 48px;
    background: linear-gradient(transparent, #000), linear-gradient(90deg, #fff, #f00);
}

.knob {
    position: absolute;
    width: 14px;
    height: 14px;
    border: 3px solid #fff;
    border-radius: 50%;
    box-shadow: 0 0 1px #666;
}

.hue-knob {
    top: 45px;
    right: 2px;
    background: #f00;
}

.shade-knob {
    top: 68px;
    left: 22px;
    background: #000;
}

/* palette */
.palette {
    display: flex;
    height: 44px;
    padding: 4px 2px 0;
}

.palette-grid {
    display: grid;
    grid-template-columns: repeat(11, 18px);
    grid-auto-rows: 18px;
    width: 216px;
    overflow: hidden;
}

.palette-grid i {
    border: 1px solid #f0f0f0;
}

.palette-grid .picked {
    border: 2px solid #e01010;
}

.palette-bar {
    display: flex;
    align-items: center;
    gap: 4px;
    height: 32px;
    padding: 0 4px 2px;
    color: #444;
}

.palette-bar select {
    width: 44px;
    color: #000;
}

.palette-bar button {
    width: 18px;
}

.palette-bar button + button {
    margin: 0 3px 0 5px;
}

.palette-name {
    padding: 2px 0 2px 5px;
    border-left: 1px solid #cdcdcd;
    color: #000;
}

/* brush preview */
.preview {
    display: flex;
    height: 51px;
    padding-top: 2px;
}

.tip {
    display: flex;
    align-items: center;
    justify-content: center;
    width: 49px;
    border: 1px solid #999;
    background: #fff;
}

.tip i {
    width: 5px;
    height: 5px;
    border-radius: 50%;
    background: #888;
}

/* brush control */
.control {
    padding: 11px 9px 0;
}

.control-row {
    display: flex;
    align-items: center;
    gap: 6px;
    height: 24px;
    padding-bottom: 4px;
}

input[type="range"] {
    appearance: none;
    min-width: 0;
    height: 16px;
    border: 1px solid #555;
}

input[type="range"]::-webkit-slider-thumb {
    appearance: none;
    width: 1px;
    height: 14px;
}

.size-range {
    flex: 1;
    background: linear-gradient(90deg, #c7e3f5 13px, #4296e8 13px 14px, #fff 14px);
}

.size-value {
    width: 35px;
    height: 20px;
    padding: 0 3px;
    border: 1px solid #777;
    font-family: "Liberation Mono", monospace;
    font-size: 10px;
}

.alpha-range {
    flex: 1;
    background: linear-gradient(90deg, #c7e3f5, #7dc0f7);
}

.control-row .mono {
    width: 30px;
    white-space: nowrap;
}

.control-row.pick {
    justify-content: space-between;
    height: 20px;
    margin-bottom: 6px;
    padding: 0;
}

.pick select {
    width: 144px;
}

/* brush list */
.filter {
    display: flex;
    align-items: center;
    height: 33px;
    padding: 4px 6px 0 5px;
}

.filter label {
    width: 68px;
}

.filter input[type="text"] {
    width: 94px;
    height: 20px;
    margin-right: 7px;
    padding: 0 3px;
    border: 1px solid #ccc;
    background: #f0f0f0;
}

.filter .push {
    width: 60px;
}

.brushes {
    display: flex;
    height: 58px;
    padding-left: 2px;
}

.brushes ul {
    width: 216px;
    margin: 0;
    padding: 0;
    overflow: hidden;
    border: 1px solid #777;
    border-bottom: 0;
    background: #fff;
    list-style: none;
    font-size: 11px;
}

.brushes li {
    display: flex;
    align-items: center;
    height: 20px;
    padding: 0 3px 0 2px;
    border-bottom: 1px solid #777;
}

.brushes li i {
    width: 14px;
    height: 14px;
    margin-right: 5px;
    border: 1px solid #111;
    background: #303030;
}

.brushes li span {
    width: 32px;
}

.brushes li span + span {
    width: auto;
    margin-right: auto;
}

.brushes .selected {
    background: #9bd0f8;
    font-weight: bold;
}

.icon-bar {
    display: flex;
    align-items: center;
    height: 32px;
    padding: 0 5px;
    color: #444;
}

.icon-bar.muted {
    color: #888;
}

.icon-bar button {
    width: 27px;
    height: 20px;
}

.icon-bar hr {
    flex: none;
    width: 1px;
    height: 20px;
    margin: 0 3px 0 2px;
    border: 0;
    background: #cdcdcd;
}

.brush-bar {
    padding: 0 4px 2px;
}

/* navigator and layers */
.nav-bar {
    padding: 2px 1px 0;
}

.navigator {
    height: 127px;
    background: #808080;
}

.layer-form {
    padding: 4px 6px 1px;
}

.layer-row {
    display: flex;
    align-items: center;
    height: 24px;
    gap: 6px;
}

.layer-row label {
    width: 60px;
    color: #000;
}

#opacity {
    width: 148px;
    border: 0;
    background: #c0c0c0;
}

#opacity::-webkit-slider-thumb {
    opacity: 0;
}

.dash {
    width: 18px;
    height: 1px;
    background: #777;
}

#blend {
    flex: 1;
}

.layer-checks {
    display: flex;
    gap: 12px;
    height: 22px;
    padding-top: 1px;
}

.layer-checks label {
    gap: 5px;
}

.layer-checks label + label + label {
    margin-left: 6px;
}

.layer-checks.second {
    gap: 37px;
}

.layer-list {
    display: flex;
    height: 126px;
    padding: 1px 4px 0 2px;
}

.layer-area {
    flex: 1;
    background: #808080;
}

.layer-bar {
    height: 32px;
    padding: 0 3px;
}

.bit {
    font: bold 10px "Liberation Sans", sans-serif;
    text-anchor: middle;
    fill: currentColor;
}

/* brush sizes */
.sizes {
    display: flex;
    flex: 1;
    justify-content: space-between;
    min-height: 0;
    padding: 2px 1px 0;
}

.size-grid {
    display: grid;
    grid-template-columns: repeat(6, 38px);
    grid-auto-rows: 48px;
    gap: 2px;
    padding-top: 1px;
    overflow: hidden;
}

.size-grid button {
    display: grid;
    grid-template-rows: 38px 10px;
    place-items: center;
    background: #fff;
    color: #222;
    font-size: 9px;
    line-height: 10px;
}

.size-grid i {
    border-radius: 50%;
    background: #222;
}

.d1 { width: 1px; height: 1px; }
.d2 { width: 2px; height: 2px; }
.d3 { width: 3px; height: 3px; }
.d4 { width: 4px; height: 4px; }
.d5 { width: 5px; height: 5px; }
.d7 { width: 7px; height: 7px; }
.d10 { width: 10px; height: 10px; }
.d12 { width: 12px; height: 12px; }
.d15 { width: 15px; height: 15px; }
.d20 { width: 20px; height: 20px; }
.d25 { width: 25px; height: 25px; }
.d28 { width: 28px; height: 28px; }
.faint-1 { opacity: 0.1; }
.faint-2 { opacity: 0.2; }
.faint-3 { opacity: 0.4; }

.statusbar {
    display: flex;
    align-items: flex-end;
    justify-content: flex-end;
    height: 22px;
    padding: 2px;
}

/* site badge over the window */
.brand {
    position: absolute;
    right: 47px;
    bottom: 47px;
    display: flex;
    align-items: center;
    gap: 18px;
    filter: drop-shadow(3px 3px 3px rgba(0, 0, 0, 0.5));
    font: 54px/64px "Noto Sans CJK SC", sans-serif;
}

.bolt {
    position: absolute;
    left: 151px;
    top: 20px;
}

.arrow {
    position: absolute;
    left: 257px;
    top: 39px;
}
```
